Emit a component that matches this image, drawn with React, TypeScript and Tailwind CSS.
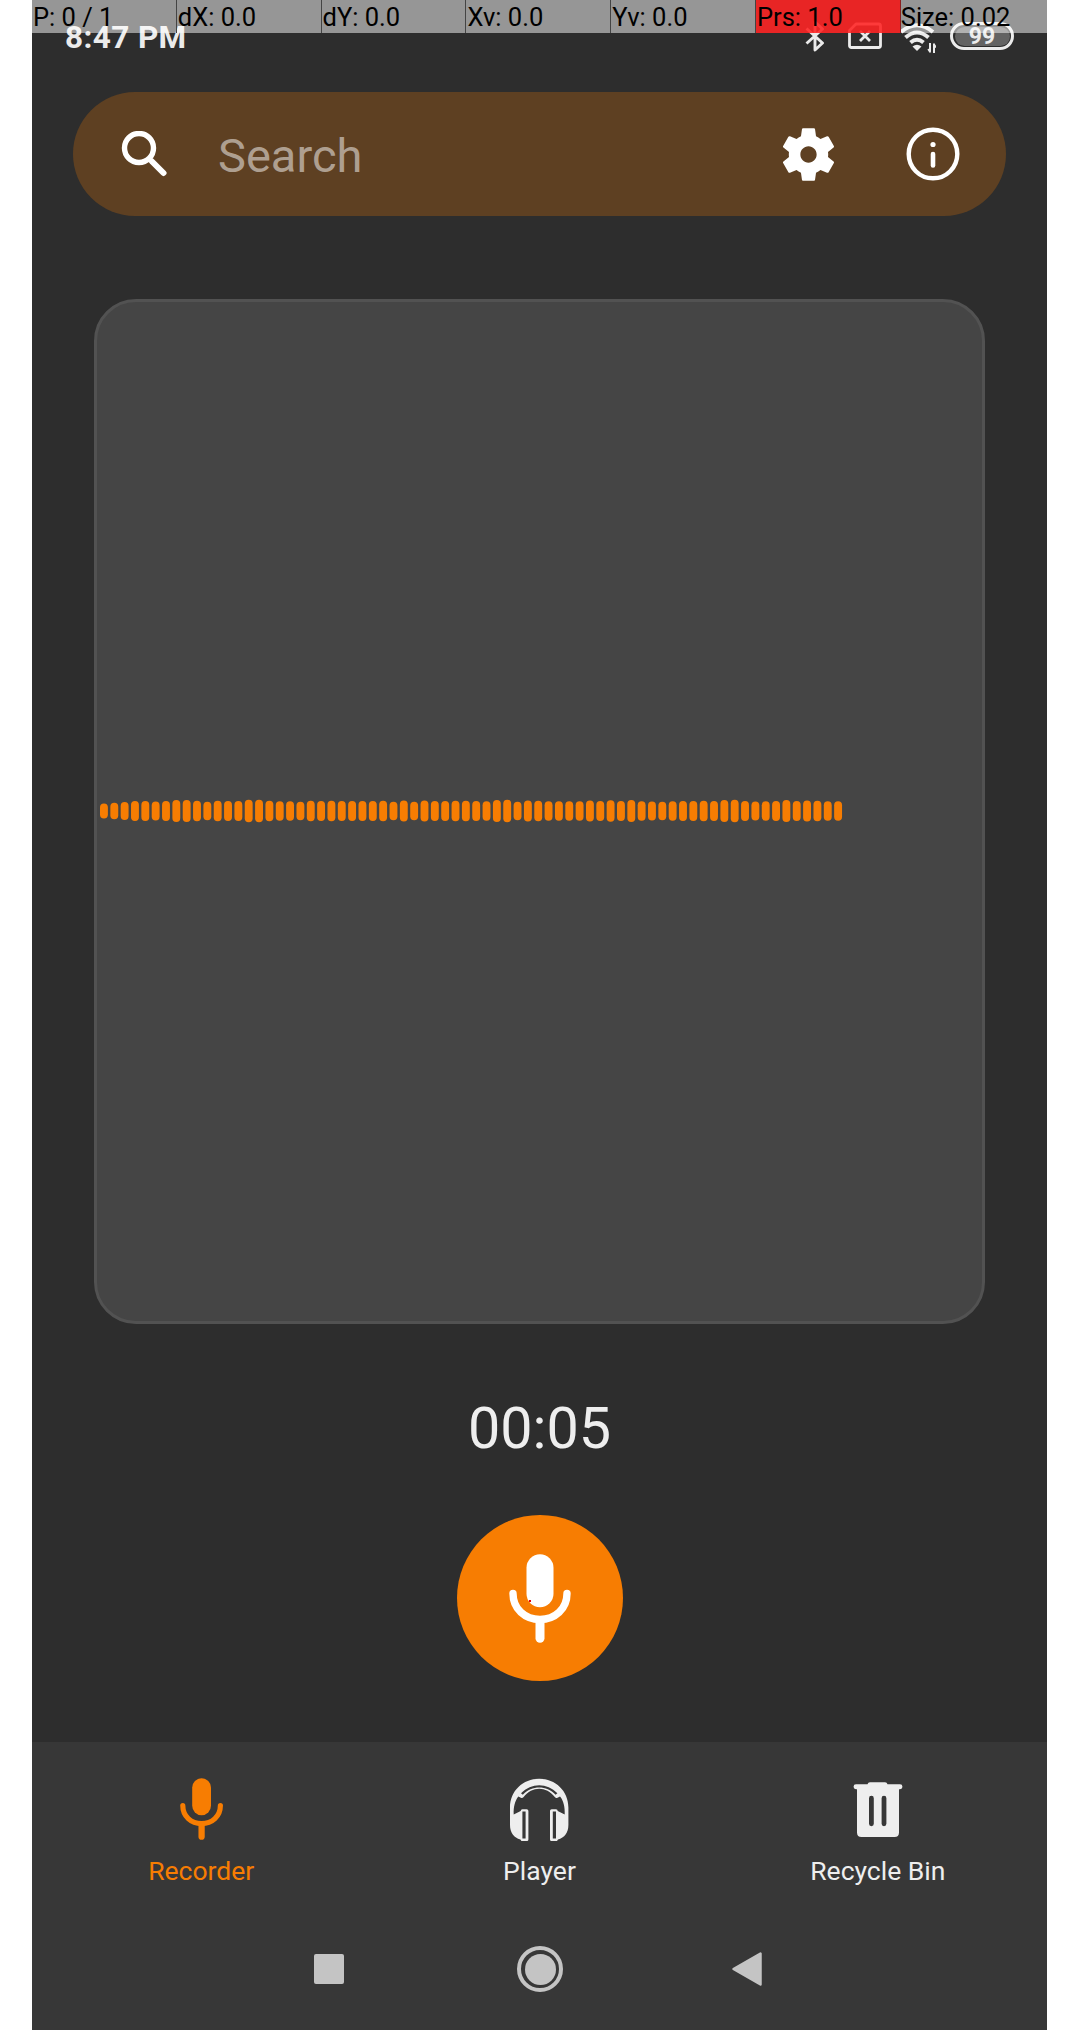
import React from "react";

const touchCells = [
  { text: "P: 0 / 1" },
  { text: "dX: 0.0" },
  { text: "dY: 0.0" },
  { text: "Xv: 0.0" },
  { text: "Yv: 0.0" },
  { text: "Prs: 1.0", hot: true },
  { text: "Size: 0.02" },
];

const levels = [
  15, 16.5, 18, 20, 20, 19, 20, 22, 22, 20.5, 18.5, 20.5, 20, 20, 22.5, 22.5, 20.5, 19.5, 19.5, 18.5,
  20.5, 20, 20.5, 20, 20, 20, 20, 20.5, 18.5, 21, 18.5, 21, 20, 20, 20.5, 20.5,
  20, 19.5, 22, 22.5, 18.5, 21, 20.5, 19.5, 19.5, 19.5, 19.5, 21, 20, 21.5, 20, 22, 19.5, 19, 18.5, 19.5,
  20, 20, 20.5, 20, 22, 22.5, 20, 19, 19.5, 20, 22, 20, 21, 20.5, 19.5, 19.5,
];

function TouchBar() {
  return (
    <div className="absolute inset-x-0 top-0 flex h-[33px] text-[25.5px] leading-[34px] text-black">
      {touchCells.map((c) => (
        <div
          key={c.text}
          className={
            c.hot
              ? "w-[144.8px] shrink-0 border-r border-[#8a2020] bg-[#ff2424]/89 pl-[1px] whitespace-nowrap"
              : "w-[144.8px] shrink-0 border-r border-[#444] bg-white/50 bg-clip-padding pl-[1px] whitespace-nowrap last:w-auto last:grow last:border-r-0 last:pl-0"
          }
        >
          {c.text}
        </div>
      ))}
    </div>
  );
}

function StatusIcons() {
  return (
    <div className="flex items-start pr-[33px]">
      <svg className="mt-[20px] h-8 w-5" viewBox="0 0 20 32" fill="none" stroke="#ebebeb" strokeWidth="2.9" strokeLinejoin="round">
        <path d="M1.5 8.5 17.5 23 10 30V2l7.5 7L1.5 23.5" />
      </svg>
      <svg className="mt-[22px] ml-[23px] h-7 w-[34px]" viewBox="0 0 34 28" fill="none" stroke="#ebebeb" strokeWidth="2.8">
        <path d="M8 2h22.500q2 0 2 2v19.500q0 2-2 2h-27q-2 0-2-2V8.500Z" strokeLinejoin="round" />
        <path d="m12 9 10 10M22 9 12 19" />
      </svg>
      <svg className="mt-[22px] ml-[18px] h-[31px] w-[36px]" viewBox="0 0 36 31" fill="none" stroke="#ebebeb" strokeWidth="4">
        <path d="M1 10Q17 -3.500 33 10M5.500 15.500Q17 5.500 28.500 15.500M10.500 20.500Q17 15 23.500 20.500" />
        <path d="M12.500 24.500Q17 21 21.500 24.500L17 29Z" fill="#ebebeb" stroke="none" />
        <path d="M30 21v9.500M28.200 27l2 3M34 31v-9.500M36 25.500l-2-3" strokeWidth="2" />
      </svg>
      <div className="mt-[22px] ml-[14px] flex h-7 w-16 items-center justify-center rounded-full border-[3px] border-[#ebebeb] p-[1.5px]">
        <div className="flex h-full w-full items-center justify-center rounded-full bg-[#636363] text-[23px] leading-none font-bold text-[#ebebeb]">
          99
        </div>
      </div>
    </div>
  );
}

function Waveform() {
  return (
    <svg className="mb-px h-6 w-[750px]" viewBox="0 0 750 24" fill="#f77d02">
      {levels.map((h, i) => (
        <rect key={i} x={i * 10.34} y={12 - h / 2} width={7.9} height={h} rx={3.9} />
      ))}
    </svg>
  );
}

function Mic({ className }: { className: string }) {
  return (
    <svg className={className} viewBox="0 0 62 89" fill="none" stroke="currentColor">
      <rect x="17.500" y="0.300" width="27" height="53" rx="13.500" fill="currentColor" stroke="none" />
      <path d="M4 39.500C4 55 16 65.500 31 65.500S58 55 58 39.500" strokeWidth="7.400" strokeLinecap="round" />
      <path d="M31 68v16.300" strokeWidth="9" strokeLinecap="round" />
    </svg>
  );
}

function Headphones() {
  return (
    <svg className="mr-px h-[64px] w-[60px]" viewBox="0 0 60 64">
      <path
        fill="#eee"
        fillRule="evenodd"
        d="M1 29.500C1 13 14 .8 30.200 .8S59.400 13 59.400 29.500V47c0 8-4 12.500-10.400 14.500l-1 1.500h-5.500q-1.500 0-1.500-1.500V33q0-1.700 1.700-1.700H47q1.700 0 1.700 1.700l7 3.500C56 29 54.500 22.500 51 18.500l-2.500 1.300Q47 20.500 46 19.300C37 8 23.400 8 14.400 19.300q-1 1.200-2.500.5L9.400 18.500C6 22.500 4.400 29 4.700 36.500l7-3.500q0-1.700 1.700-1.700h4.300q1.700 0 1.700 1.700V61.500Q19.400 63 17.900 63h-5.500l-1-1.500C5 59.500 1 55 1 47ZM12 15.200l1.800 1.500C23 7 37.400 7 46.600 16.700l1.800-1.500C38 4.500 22.400 4.500 12 15.200ZM13.400 33.500v27h3.200v-27ZM43.800 33.500v27h3.200v-27Z"
      />
    </svg>
  );
}

function Trash() {
  return (
    <svg className="mt-1 h-[56px] w-[50px]" viewBox="0 0 50 56">
      <path
        fill="#eee"
        fillRule="evenodd"
        d="M17 .3h15q2 0 2.500 2h12.500a2.400 2.400 0 0 1 0 4.900H46V50.500q0 4.500-4.500 4.500h-33Q4 55 4 50.500V7.200H3a2.400 2.400 0 0 1 0-4.900h11.500q.5-2 2.500-2ZM16 16.200v25.600a2.400 2.400 0 0 0 4.800 0V16.200a2.400 2.400 0 0 0-4.800 0ZM28.600 16.200v25.600a2.400 2.400 0 0 0 4.800 0V16.200a2.400 2.400 0 0 0-4.800 0Z"
      />
    </svg>
  );
}

export default function App() {
  return (
    <div className="flex h-[2030px] w-[1088px] bg-white pl-8 font-[Roboto,sans-serif]">
      <div className="relative flex h-full w-[1015px] flex-col bg-[#2d2d2d]">
        <header className="flex h-[92px] shrink-0 justify-between">
          <div className="mt-[18px] ml-[33px] h-10 text-[31.5px] leading-10 font-bold tracking-[0.4px] text-[#ebebeb]">8:47 PM</div>
          <StatusIcons />
        </header>
        <TouchBar />

        <div className="mr-[41px] ml-[41px] flex h-[124px] shrink-0 items-center rounded-full bg-[#5e4022]">
          <svg className="ml-[48px] h-[46px] w-[46px]" viewBox="0 0 46 46" fill="none" stroke="#fff" strokeLinecap="round">
            <circle cx="18" cy="17" r="14.500" strokeWidth="5.400" />
            <path d="M31 30.500 42.500 42" strokeWidth="6" />
          </svg>
          <span className="mt-[2px] ml-[51px] text-[47px] leading-none text-[#ae9f90]">Search</span>
          <svg className="ml-auto h-[63px] w-[63px]" viewBox="0 0 24 24" fill="#fff">
            <path d="M19.430 12.980c.04-.32.07-.64.07-.98s-.03-.66-.07-.98l2.110-1.650c.19-.15.24-.42.12-.64l-2-3.460c-.12-.22-.39-.3-.61-.22l-2.490 1c-.52-.4-1.080-.73-1.690-.98l-.38-2.650C14.460 2.180 14.250 2 14 2h-4c-.25 0-.46.18-.49.42l-.38 2.650c-.61.25-1.170.59-1.690.98l-2.490-1c-.23-.09-.49 0-.61.22l-2 3.460c-.13.22-.07.49.12.64l2.110 1.650c-.04.32-.07.65-.07.98s.03.66.07.98l-2.110 1.650c-.19.15-.24.42-.12.64l2 3.460c.12.22.39.3.61.22l2.490-1c.52.4 1.080.73 1.690.98l.38 2.650c.03.24.24.42.49.42h4c.25 0 .46-.18.49-.42l.38-2.650c.61-.25 1.170-.59 1.690-.98l2.490 1c.23.09.49 0 .61-.22l2-3.460c.12-.22.07-.49-.12-.64l-2.110-1.650zM12 15.100c-1.710 0-3.100-1.390-3.100-3.100s1.390-3.100 3.100-3.100 3.100 1.390 3.100 3.100-1.390 3.100-3.100 3.100z" />
          </svg>
          <svg className="mr-[46px] ml-[66px] h-[54px] w-[54px]" viewBox="0 0 54 54" fill="none" stroke="#fff">
            <circle cx="27" cy="27" r="24.300" strokeWidth="4.400" />
            <circle cx="27" cy="17.500" r="2.600" fill="#fff" stroke="none" />
            <path d="M27 27v11.500" strokeWidth="4.600" strokeLinecap="round" />
          </svg>
        </div>

        <div className="mt-[83px] ml-[62px] flex h-[1025px] w-[891px] shrink-0 items-center rounded-[42px] border-[3px] border-[#525252] bg-[#454545] pl-[3.300px]">
          <Waveform />
        </div>

        <div className="mt-[71px] flex h-[68px] shrink-0 items-center justify-center text-[57.500px] leading-[68px] text-[#eee]">00:05</div>

        <button className="relative mt-[52px] flex h-[166px] w-[166px] shrink-0 items-center justify-center self-center rounded-full bg-[#f77d02] text-white">
          <Mic className="h-[89px] w-[62px]" />
          <span className="absolute top-[85px] left-[72px] h-0.5 w-0.5 bg-red-600" />
        </button>

        <nav className="mt-auto flex h-[288px] shrink-0 flex-col bg-[#373737]">
          <div className="grid grid-cols-3 pt-[36px] text-[26.500px] leading-8 text-[#eee]">
            <div className="flex flex-col items-center text-[#f77d02]">
              <div className="flex h-[77px] items-start">
                <Mic className="h-[62px] w-[43.200px]" />
              </div>
              Recorder
            </div>
            <div className="flex flex-col items-center">
              <div className="flex h-[77px] items-start">
                <Headphones />
              </div>
              Player
            </div>
            <div className="flex flex-col items-center">
              <div className="flex h-[77px] items-start">
                <Trash />
              </div>
              Recycle Bin
            </div>
          </div>
          <div className="mt-[58px] flex h-12 items-center pl-[282px]">
            <div className="h-[30px] w-[30px] rounded-[2px] bg-[#c4c4c4]" />
            <div className="ml-[173px] flex h-[46px] w-[46px] items-center justify-center rounded-full border-4 border-[#c4c4c4]">
              <div className="h-[31px] w-[31px] rounded-full bg-[#c4c4c4]" />
            </div>
            <svg className="ml-[169px] h-[36px] w-[30px]" viewBox="0 0 30 36">
              <path d="M1.500 18 28.500 2.500v31Z" fill="#c4c4c4" stroke="#c4c4c4" strokeWidth="2.500" strokeLinejoin="round" />
            </svg>
          </div>
        </nav>
      </div>
    </div>
  );
}
